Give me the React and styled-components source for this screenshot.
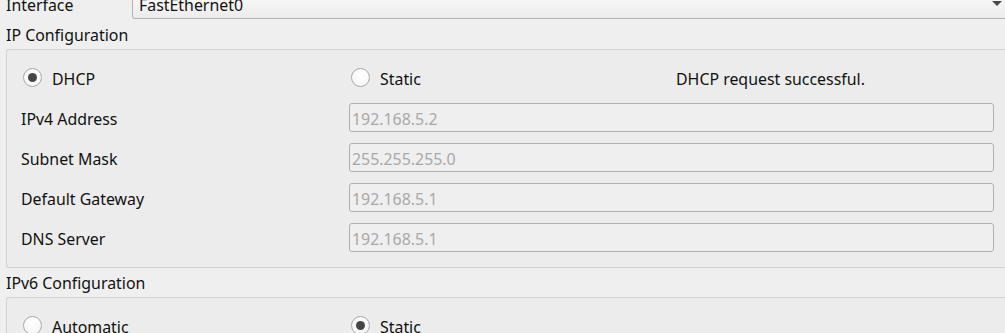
import React from "react";
import styled, { createGlobalStyle } from "styled-components";

const GlobalStyle = createGlobalStyle`
  html, body {
    margin: 0;
    padding: 0;
    background: #efefef;
    overflow: hidden;
  }
  body {
    font-family: "Noto Sans", "Open Sans", sans-serif;
    font-size: 15.9px;
    color: #111;
  }
`;

const Page = styled.div`
  width: 1012px;
  margin-top: -10px;
  padding-left: 6px;
  display: flex;
  flex-direction: column;
`;

const InterfaceRow = styled.div`
  display: flex;
  align-items: stretch;
  height: 29px;
`;

const RowLabel = styled.div`
  width: 126px;
  line-height: 20px;
  padding-top: 5px;
`;

const Combo = styled.div`
  flex: 1;
  position: relative;
  box-sizing: border-box;
  border: 1px solid #b4b4b4;
  border-top: none;
  border-radius: 0 0 0 3px;
  background: linear-gradient(#fbfbfb, #ececec);
  padding: 5px 6px 0;
  line-height: 20px;
`;

const Arrow = styled.span`
  position: absolute;
  right: 15px;
  top: 11px;
  width: 0;
  height: 0;
  border-left: 5px solid transparent;
  border-right: 5px solid transparent;
  border-top: 5px solid #4a4a4a;
`;

const SectionTitle = styled.div`
  line-height: 20px;
  margin-top: ${(p) => p.$top}px;
  margin-bottom: 4px;
`;

const Group = styled.div`
  box-sizing: border-box;
  border: 1px solid #d3d3d3;
  border-right: none;
  border-radius: 3px 0 0 3px;
  background: #ececec;
  padding: 13px 0 15px 14px;
  display: grid;
  grid-template-columns: 328px 645px;
  grid-auto-rows: 29px;
  row-gap: 11px;
`;

const RadioRow = styled.div`
  grid-column: 1 / 3;
  display: grid;
  grid-template-columns: 329px 326px 1fr;
  align-items: center;
`;

const RadioOption = styled.label`
  display: flex;
  align-items: center;
  gap: 10px;
  padding-left: ${(p) => p.$pad || 2}px;
  line-height: 20px;
`;

const RadioText = styled.span`
  padding-top: 2px;
`;

const RadioCircle = styled.span`
  box-sizing: border-box;
  width: 19px;
  height: 19px;
  border-radius: 50%;
  border: 1px solid #a9a9a9;
  background: radial-gradient(circle at 50% 35%, #ffffff, #f4f4f4);
  display: flex;
  align-items: center;
  justify-content: center;

  &::after {
    content: "";
    width: 9px;
    height: 9px;
    border-radius: 50%;
    background: #454545;
    display: ${(p) => (p.$checked ? "block" : "none")};
  }
`;

const Message = styled.span`
  line-height: 20px;
  padding-top: 2px;
`;

const FieldLabel = styled.div`
  display: flex;
  align-items: center;
  line-height: 20px;
  padding-top: 2px;
`;

const Field = styled.div`
  box-sizing: border-box;
  border: 1px solid #b0b0b0;
  border-radius: 3px;
  background: #efefef;
  color: #a9a9a9;
  padding: 2px 2px 0;
  display: flex;
  align-items: center;
  line-height: 20px;
`;

const fields = [
  ["IPv4 Address", "192.168.5.2"],
  ["Subnet Mask", "255.255.255.0"],
  ["Default Gateway", "192.168.5.1"],
  ["DNS Server", "192.168.5.1"],
];

function Radio({ checked, children, pad }) {
  return (
    <RadioOption $pad={pad}>
      <RadioCircle $checked={checked} />
      <RadioText>{children}</RadioText>
    </RadioOption>
  );
}

export default function App() {
  return (
    <>
      <GlobalStyle />
      <Page>
        <InterfaceRow>
          <RowLabel>Interface</RowLabel>
          <Combo>
            FastEthernet0
            <Arrow />
          </Combo>
        </InterfaceRow>

        <SectionTitle $top={6}>IP Configuration</SectionTitle>
        <Group>
          <RadioRow>
            <Radio checked>DHCP</Radio>
            <Radio pad={1}>Static</Radio>
            <Message>DHCP request successful.</Message>
          </RadioRow>
          {fields.map(([label, value]) => (
            <React.Fragment key={label}>
              <FieldLabel>{label}</FieldLabel>
              <Field>{value}</Field>
            </React.Fragment>
          ))}
        </Group>

        <SectionTitle $top={5}>IPv6 Configuration</SectionTitle>
        <Group>
          <RadioRow>
            <Radio>Automatic</Radio>
            <Radio pad={1} checked>
              Static
            </Radio>
          </RadioRow>
        </Group>
      </Page>
    </>
  );
}
